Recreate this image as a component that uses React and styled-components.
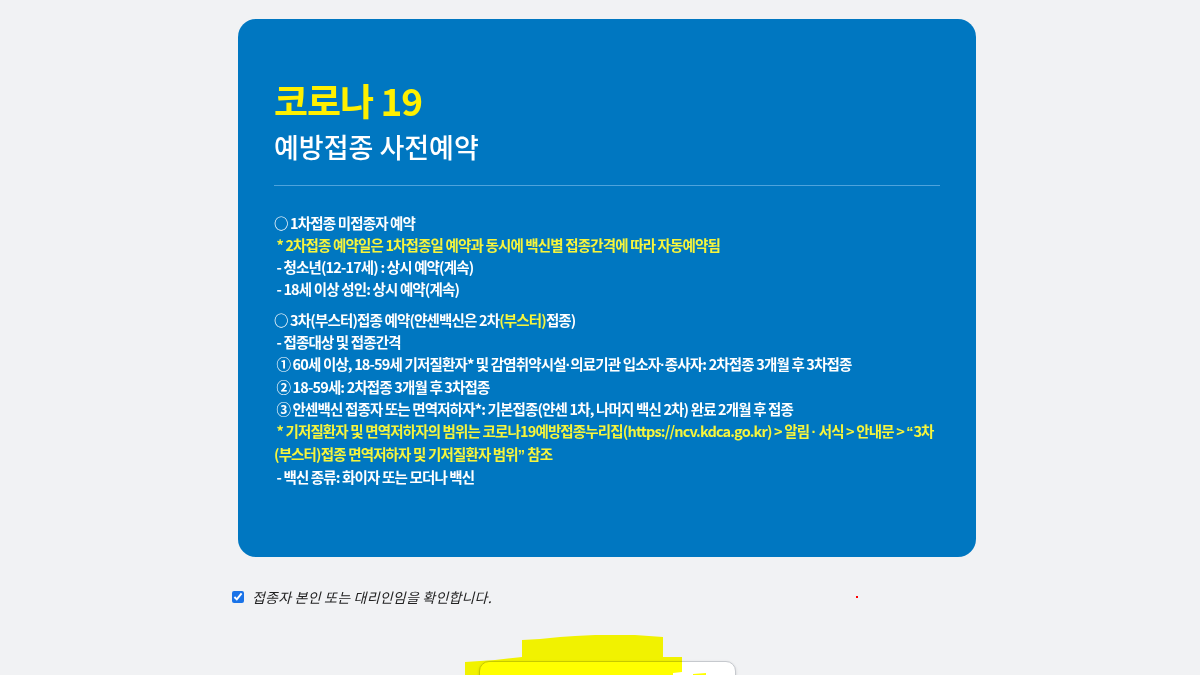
import React from "react";
import styled, { createGlobalStyle } from "styled-components";

const Global = createGlobalStyle`
  html, body { margin: 0; padding: 0; background: #f1f2f4; }
  body { font-family: "Noto Sans CJK KR", "Noto Sans", sans-serif; overflow: hidden; }
`;

const Page = styled.div`
  padding-top: 19px;
`;

const Wrapper = styled.div`
  width: 752px;
  box-sizing: border-box;
  padding-left: 14px;
  margin: 0 auto;
`;

const Card = styled.section`
  background: #0077c1;
  border-radius: 18px;
  padding: 56px 36px 60px 36px;
  height: 538px;
  box-sizing: border-box;
`;

const Title = styled.h1`
  margin: 0;
  color: #fff000;
  font-size: 37px;
  font-weight: 700;
  line-height: 50px;
  letter-spacing: -1px;
`;

const Subtitle = styled.h2`
  margin: 4px 0 0 0;
  color: #ffffff;
  font-size: 27px;
  font-weight: 500;
  line-height: 36px;
  letter-spacing: 0;
`;

const Divider = styled.hr`
  border: 0;
  height: 1px;
  background: #4ea3dc;
  margin: 20px 0 26px 0;
`;

const Group = styled.div`
  margin-bottom: 9px;
`;

const Line = styled.p`
  margin: 0;
  color: ${(p) => (p.$yellow ? "#f6f53c" : "#ffffff")};
  font-size: 14.5px;
  font-weight: 700;
  line-height: 22px;
  letter-spacing: -0.85px;
  white-space: pre-wrap;
`;

const Hi = styled.span`
  color: #f6f53c;
`;

/* proportional punctuation (quotes, middle dots) as in the reference */
const P = styled.span`
  font-family: "Liberation Sans", "Noto Sans", sans-serif;
  letter-spacing: -0.2px;
`;

const ConfirmRow = styled.label`
  display: flex;
  align-items: center;
  gap: 8px;
  margin: 30px 0 0 -6px;
  font-size: 14px;
  font-style: italic;
  color: #222;
  letter-spacing: 0.2px;
  position: relative;
`;

const Check = styled.input`
  margin: 0;
  width: 12px;
  height: 12px;
  accent-color: #1a73e8;
`;

const RedDot = styled.span`
  position: absolute;
  left: 624px;
  top: 9px;
  width: 2px;
  height: 2px;
  background: #ff0000;
`;

const ButtonArea = styled.div`
  position: relative;
  display: flex;
  justify-content: center;
  margin-top: 54px;
`;

const Button = styled.button`
  width: 257px;
  height: 52px;
  background: #fff;
  border: 1px solid #c6c9ce;
  border-radius: 10px;
  box-shadow: 0 1px 3px rgba(0,0,0,0.15);
`;

const Highlight = styled.svg`
  position: absolute;
  left: 227px;
  top: -31px;
  mix-blend-mode: multiply;
  pointer-events: none;
`;

export default function App() {
  return (
    <>
      <Global />
      <Page>
        <Wrapper>
          <Card>
            <Title>코로나 19</Title>
            <Subtitle>예방접종 사전예약</Subtitle>
            <Divider />
            <Group>
              <Line>○ 1차접종 미접종자 예약</Line>
              <Line $yellow> * 2차접종 예약일은 1차접종일 예약과 동시에 백신별 접종간격에 따라 자동예약됨</Line>
              <Line> - 청소년(12-17세) : 상시 예약(계속)</Line>
              <Line> - 18세 이상 성인: 상시 예약(계속)</Line>
            </Group>
            <Group>
              <Line>○ 3차(부스터)접종 예약(얀센백신은 2차<Hi>(부스터)</Hi>접종)</Line>
              <Line> - 접종대상 및 접종간격</Line>
              <Line> ① 60세 이상, 18-59세 기저질환자* 및 감염취약시설<P>·</P>의료기관 입소자<P>·</P>종사자: 2차접종 3개월 후 3차접종</Line>
              <Line> ② 18-59세: 2차접종 3개월 후 3차접종</Line>
              <Line> ③ 안센백신 접종자 또는 면역저하자*: 기본접종(얀센 1차, 나머지 백신 2차) 완료 2개월 후 접종</Line>
              <Line $yellow> * 기저질환자 및 면역저하자의 범위는 코로나19예방접종누리집(https://ncv.kdca.go.kr) &gt; 알림 <P>·</P> 서식 &gt; 안내문 &gt; <P>“</P>3차(부스터)접종 면역저하자 및 기저질환자 범위<P>”</P> 참조</Line>
              <Line> - 백신 종류: 화이자 또는 모더나 백신</Line>
            </Group>
          </Card>
          <ConfirmRow>
            <Check type="checkbox" defaultChecked />
            <span>접종자 본인 또는 대리인임을 확인합니다.</span>
            <RedDot />
          </ConfirmRow>
          <ButtonArea>
            <Button type="button" aria-label="예약하기" />
            <Highlight width="245" height="46" viewBox="0 0 245 46">
              <polygon
                fill="#ffff00"
                points="57,10 75,9 95,7 110,6 130,5 150,5 170,5 198,7 198,27 217,27 217,42 208,43 208,46 0,46 0,32 15,31 30,30 57,27"
              />
              <polygon fill="#ffff00" points="228,44 241,43 241,46 228,46" />
            </Highlight>
          </ButtonArea>
        </Wrapper>
      </Page>
    </>
  );
}
